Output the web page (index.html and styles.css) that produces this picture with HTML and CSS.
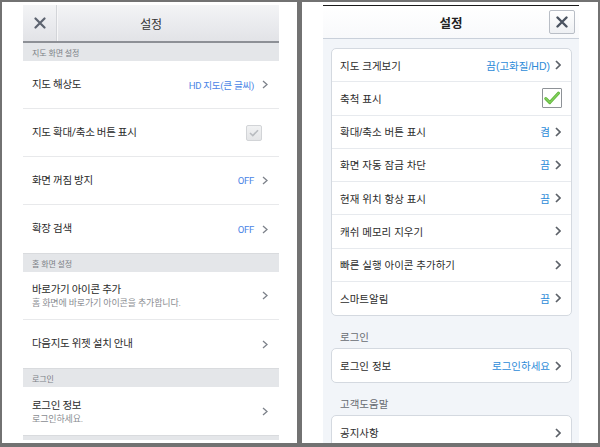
FILE: index.html
```html
<!DOCTYPE html>
<html lang="ko">
<head>
<meta charset="utf-8">
<title>설정</title>
<link rel="stylesheet" href="styles.css">
</head>
<body>
<div class="frame">
  <section class="panel panel-a">
    <div class="col col-a">
      <header class="a-head">
        <span class="a-close">
          <svg width="12" height="12" viewBox="0 0 12 12"><path d="M1.5 1.5 L10.5 10.5 M10.5 1.5 L1.5 10.5" stroke="#5d6470" stroke-width="2.2" stroke-linecap="round"/></svg>
        </span>
        <h1 class="a-title">설정</h1>
        <span></span>
      </header>
      <div class="a-sec a-sec-first">지도 화면 설정</div>
      <div class="a-row"><span class="a-label">지도 해상도</span><span class="a-val">HD 지도(큰 글씨)</span><svg class="a-chev" width="6" height="9" viewBox="0 0 6 9"><path d="M1 1 L5 4.5 L1 8" fill="none" stroke="#7d828a" stroke-width="1.3"/></svg></div>
      <div class="a-row"><span class="a-label">지도 확대/축소 버튼 표시</span><span class="a-check"><svg width="10" height="8" viewBox="0 0 10 8"><path d="M1 4 L3.8 6.6 L9 1.2" fill="none" stroke="#b9bcc0" stroke-width="1.6"/></svg></span></div>
      <div class="a-row"><span class="a-label">화면 꺼짐 방지</span><span class="a-val">OFF</span><svg class="a-chev" width="6" height="9" viewBox="0 0 6 9"><path d="M1 1 L5 4.5 L1 8" fill="none" stroke="#7d828a" stroke-width="1.3"/></svg></div>
      <div class="a-row"><span class="a-label">확장 검색</span><span class="a-val">OFF</span><svg class="a-chev" width="6" height="9" viewBox="0 0 6 9"><path d="M1 1 L5 4.5 L1 8" fill="none" stroke="#7d828a" stroke-width="1.3"/></svg></div>
      <div class="a-sec">홈 화면 설정</div>
      <div class="a-row"><span class="a-label a-two"><span>바로가기 아이콘 추가</span><small>홈 화면에 바로가기 아이콘을 추가합니다.</small></span><svg class="a-chev" width="6" height="9" viewBox="0 0 6 9"><path d="M1 1 L5 4.5 L1 8" fill="none" stroke="#7d828a" stroke-width="1.3"/></svg></div>
      <div class="a-row"><span class="a-label">다음지도 위젯 설치 안내</span><svg class="a-chev" width="6" height="9" viewBox="0 0 6 9"><path d="M1 1 L5 4.5 L1 8" fill="none" stroke="#7d828a" stroke-width="1.3"/></svg></div>
      <div class="a-sec">로그인</div>
      <div class="a-row"><span class="a-label a-two"><span>로그인 정보</span><small>로그인하세요.</small></span><svg class="a-chev" width="6" height="9" viewBox="0 0 6 9"><path d="M1 1 L5 4.5 L1 8" fill="none" stroke="#7d828a" stroke-width="1.3"/></svg></div>
      <div class="a-sec a-sec-last"></div>
    </div>
  </section>

  <section class="panel panel-b">
    <div class="col col-b">
      <div class="b-topline"></div>
      <header class="b-head">
        <span></span>
        <h1 class="b-title">설정</h1>
        <span class="b-close">
          <svg width="12" height="12" viewBox="0 0 12 12"><path d="M1.5 1.5 L10.5 10.5 M10.5 1.5 L1.5 10.5" stroke="#4a5360" stroke-width="2.4" stroke-linecap="round"/></svg>
        </span>
      </header>
      <div class="b-body">
        <div class="b-card">
          <div class="b-row"><span class="b-label">지도 크게보기</span><span class="b-val">끔(고화질/HD)</span><svg class="b-chev" width="6" height="10" viewBox="0 0 6 10"><path d="M1 1 L5 5 L1 9" fill="none" stroke="#5c6168" stroke-width="1.7"/></svg></div>
          <div class="b-row"><span class="b-label">축척 표시</span><span class="b-check"><svg width="16" height="14" viewBox="0 0 16 14"><path d="M1.8 7.6 L5.8 11.6 L14.4 2.2" fill="none" stroke="#5fb53a" stroke-width="3" stroke-linecap="round" stroke-linejoin="round"/><path d="M1.8 7.6 L5.8 11.6 L14.4 2.2" fill="none" stroke="#82d05c" stroke-width="1.4" stroke-linecap="round" stroke-linejoin="round"/></svg></span></div>
          <div class="b-row"><span class="b-label">확대/축소 버튼 표시</span><span class="b-val">켬</span><svg class="b-chev" width="6" height="10" viewBox="0 0 6 10"><path d="M1 1 L5 5 L1 9" fill="none" stroke="#5c6168" stroke-width="1.7"/></svg></div>
          <div class="b-row"><span class="b-label">화면 자동 잠금 차단</span><span class="b-val">끔</span><svg class="b-chev" width="6" height="10" viewBox="0 0 6 10"><path d="M1 1 L5 5 L1 9" fill="none" stroke="#5c6168" stroke-width="1.7"/></svg></div>
          <div class="b-row"><span class="b-label">현재 위치 항상 표시</span><span class="b-val">끔</span><svg class="b-chev" width="6" height="10" viewBox="0 0 6 10"><path d="M1 1 L5 5 L1 9" fill="none" stroke="#5c6168" stroke-width="1.7"/></svg></div>
          <div class="b-row"><span class="b-label">캐쉬 메모리 지우기</span><svg class="b-chev" width="6" height="10" viewBox="0 0 6 10"><path d="M1 1 L5 5 L1 9" fill="none" stroke="#5c6168" stroke-width="1.7"/></svg></div>
          <div class="b-row"><span class="b-label">빠른 실행 아이콘 추가하기</span><svg class="b-chev" width="6" height="10" viewBox="0 0 6 10"><path d="M1 1 L5 5 L1 9" fill="none" stroke="#5c6168" stroke-width="1.7"/></svg></div>
          <div class="b-row"><span class="b-label">스마트알림</span><span class="b-val">끔</span><svg class="b-chev" width="6" height="10" viewBox="0 0 6 10"><path d="M1 1 L5 5 L1 9" fill="none" stroke="#5c6168" stroke-width="1.7"/></svg></div>
        </div>
        <div class="b-sec">로그인</div>
        <div class="b-card">
          <div class="b-row"><span class="b-label">로그인 정보</span><span class="b-val">로그인하세요</span><svg class="b-chev" width="6" height="10" viewBox="0 0 6 10"><path d="M1 1 L5 5 L1 9" fill="none" stroke="#5c6168" stroke-width="1.7"/></svg></div>
        </div>
        <div class="b-sec">고객도움말</div>
        <div class="b-card">
          <div class="b-row"><span class="b-label">공지사항</span><svg class="b-chev" width="6" height="10" viewBox="0 0 6 10"><path d="M1 1 L5 5 L1 9" fill="none" stroke="#5c6168" stroke-width="1.7"/></svg></div>
        </div>
      </div>
    </div>
  </section>
</div>
</body>
</html>
```

FILE: styles.css
```css
* { box-sizing: border-box; margin: 0; padding: 0; }

html, body {
  width: 600px;
  height: 447px;
  overflow: hidden;
}

body {
  background: #727272;
  font-family: "Noto Sans CJK KR", sans-serif;
  color: #2f2f2f;
}

.frame {
  display: flex;
  gap: 5px;
  padding: 2px 2px 4px 2px;
  height: 447px;
}

.panel {
  background: #fff;
  height: 441px;
  padding: 3px 0 0 21px;
  overflow: hidden;
}

.panel-a { width: 295px; }
.panel-b { width: 296px; }

.col {
  width: 256px;
  overflow: hidden;
}

/* ---------- Left (Android) ---------- */
.col-a {
  height: 435px;
  font-family: "Roboto", "Noto Sans CJK KR", sans-serif;
}

.a-head {
  height: 38px;
  display: grid;
  grid-template-columns: 34px 1fr 34px;
  align-items: center;
  background: linear-gradient(#f3f4f6, #e2e3e7);
  border-bottom: 2px solid #8d9096;
}

.a-close {
  height: 100%;
  display: flex;
  align-items: center;
  justify-content: center;
  border-right: 1px solid #d3d5d9;
  box-shadow: 1px 0 0 #f7f7f8;
}

.a-title {
  text-align: center;
  font-size: 12px;
  font-weight: 400;
  color: #333;
  letter-spacing: -0.2px;
}

.a-sec {
  height: 19px;
  background: #e4e6e9;
  border-top: 1px solid #d9dbde;
  font-size: 8px;
  color: #7b7f86;
  padding-left: 9px;
  display: flex;
  align-items: center;
  letter-spacing: -0.1px;
}

.a-sec-first { height: 18px; border-top: 0; }
.a-sec-last { height: 6px; }

.a-row {
  height: 48px;
  display: flex;
  align-items: center;
  padding: 0 11px 0 9px;
  border-bottom: 1px solid #e8e9eb;
}

.a-row:has(+ .a-sec) { border-bottom: 0; }

.a-label {
  flex: 1;
  font-size: 10.5px;
  line-height: 14px;
  color: #2b2b2b;
  letter-spacing: -0.3px;
}

.a-two {
  display: flex;
  flex-direction: column;
  padding-top: 1px;
}

.a-two small {
  font-size: 9px;
  line-height: 12px;
  color: #8a8d92;
  letter-spacing: -0.15px;
}

.a-val {
  font-size: 9.6px;
  color: #4b85e6;
  margin-right: 8px;
  letter-spacing: -0.3px;
}

.a-chev { flex: none; }

.a-check {
  width: 16px;
  height: 16px;
  margin-right: 6px;
  border: 1px solid #d2d4d7;
  border-radius: 2px;
  background: linear-gradient(#f1f2f3, #e4e5e7);
  display: flex;
  align-items: center;
  justify-content: center;
}

/* ---------- Right (iOS) ---------- */
.col-b {
  height: 438px;
  background: #f2f5f9;
  font-family: "Liberation Sans", "Noto Sans CJK KR", sans-serif;
}

.b-topline {
  height: 1px;
  background: #1a1a1a;
}

.b-head {
  height: 33px;
  display: grid;
  grid-template-columns: 30px 1fr 30px;
  align-items: center;
  background: linear-gradient(#ffffff, #f8f9fb);
  border-bottom: 1px solid #c9d0da;
}

.b-title {
  text-align: center;
  font-size: 12.5px;
  font-weight: 700;
  color: #222;
}

.b-close {
  justify-self: end;
  margin-right: 4px;
  width: 26px;
  height: 24px;
  border: 1px solid #b9bec6;
  border-radius: 2px;
  background: linear-gradient(#ffffff, #eef0f3);
  display: flex;
  align-items: center;
  justify-content: center;
}

.b-body {
  padding-top: 9px;
}

.b-card {
  margin: 0 7px 0 8px;
  background: #fff;
  border: 1px solid #d4d9e0;
  border-radius: 5px;
}

.b-row {
  height: 33.25px;
  display: flex;
  align-items: center;
  padding: 0 10px 0 8px;
  border-bottom: 1px solid #e7eaee;
}

.b-row:last-child { border-bottom: 0; }

.b-label {
  flex: 1;
  font-size: 10.5px;
  color: #2c2c2c;
}

.b-val {
  font-size: 10.5px;
  color: #2d8bd8;
  margin-right: 5px;
}

.b-chev { flex: none; }

.b-check {
  width: 20px;
  height: 20px;
  margin-right: -1px;
  border: 1px solid #8e9297;
  border-radius: 1px;
  background: #fff;
  display: flex;
  align-items: center;
  justify-content: center;
}

.b-sec {
  padding: 14px 0 4px 17px;
  font-size: 10.5px;
  line-height: 14px;
  color: #686c72;
}
```
